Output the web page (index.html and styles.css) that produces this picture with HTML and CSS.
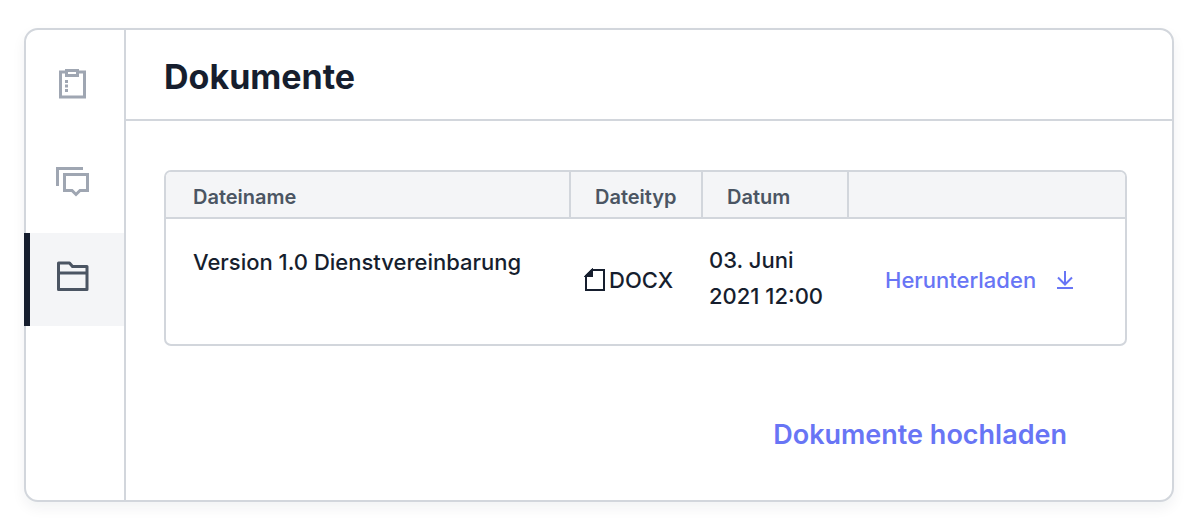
FILE: index.html
```html
<!DOCTYPE html>
<html lang="de">
<head>
  <meta charset="UTF-8" />
  <meta name="viewport" content="width=device-width, initial-scale=1.0"/>
  <title>Dokumente</title>
  <link rel="stylesheet" href="styles.css">
</head>
<body>
  <div class="card">
    <nav class="sidebar">
      <a class="nav-item" href="#aufgaben" aria-label="Aufgaben">
        <svg viewBox="0 0 39 39" fill="none" stroke="currentColor" stroke-width="3">
          <path d="M14 8H7.500V33H31.500V8H25"/>
          <path d="M13.500 6.500H24.500V11.500H13.500z"/>
          <path d="M12 17.500h3M12 22h3M12 26.500h3"/>
        </svg>
      </a>
      <a class="nav-item" href="#nachrichten" aria-label="Nachrichten">
        <svg viewBox="0 0 39 39" fill="none" stroke="currentColor" stroke-width="3">
          <path d="M4.500 24V6.500H30"/>
          <path d="M11.500 12.500H34.500V28.500H27L23 32.500L19 28.500H11.500z"/>
        </svg>
      </a>
      <a class="nav-item active" href="#dokumente" aria-label="Dokumente">
        <svg viewBox="0 0 39 39" fill="none" stroke="currentColor" stroke-width="3" stroke-linejoin="round">
          <path d="M5.500 3H16.500L19.500 6.500H34V29.500H5.500z"/>
          <path d="M5.500 13H34"/>
        </svg>
      </a>
    </nav>

    <main class="content">
      <header>
        <h1>Dokumente</h1>
      </header>

      <div class="documents">
        <div class="table-box">
          <table>
            <thead>
              <tr>
                <th class="col-name">Dateiname</th>
                <th class="col-type">Dateityp</th>
                <th class="col-date">Datum</th>
                <th class="col-action"></th>
              </tr>
            </thead>
            <tbody>
              <tr>
                <td class="file-name">Version 1.0 Dienstvereinbarung</td>
                <td class="file-type">
                  <span class="type">
                    <svg viewBox="0 0 22 24" fill="none" stroke="currentColor" stroke-width="2">
                      <path d="M8 2H20V22H2V8z"/>
                      <path d="M8 2V8H2z" fill="currentColor"/>
                    </svg>DOCX
                  </span>
                </td>
                <td class="file-date">03. Juni<br>2021 12:00</td>
                <td class="file-action">
                  <a class="download" href="#download">
                    Herunterladen
                    <svg viewBox="0 0 18 20" fill="none" stroke="currentColor" stroke-width="2">
                      <path d="M9 1V14M2 7.500L9 14.500L16 7.500M1 18H17"/>
                    </svg>
                  </a>
                </td>
              </tr>
            </tbody>
          </table>
        </div>

        <button class="upload-btn" type="button">Dokumente hochladen</button>
      </div>
    </main>
  </div>
</body>
</html>
```
FILE: styles.css
```css
* {
  margin: 0;
  padding: 0;
  box-sizing: border-box;
}

body {
  background-color: #ffffff;
  color: #161e2e;
  font-family: Inter, sans-serif;
  padding: 28px 26px 30px 24px;
}

.card {
  display: flex;
  background-color: #ffffff;
  border: 2px solid #d2d6dc;
  border-radius: 14px;
  box-shadow: 0 6px 14px rgba(22, 30, 46, 0.06);
}

.sidebar {
  display: flex;
  flex-direction: column;
  gap: 5px;
  padding-top: 7px;
  border-right: 2px solid #d2d6dc;
}

.nav-item {
  position: relative;
  padding: 27px 32px 27px 27px;
  color: #9fa6b2;
}

.nav-item svg {
  display: block;
  width: 39px;
  height: 39px;
}

.nav-item.active {
  background-color: #f4f5f7;
  color: #4b5563;
}

.nav-item.active::before {
  content: "";
  position: absolute;
  top: 0;
  bottom: 0;
  left: -2px;
  width: 6px;
  background-color: #161e2e;
}

.content {
  flex: 1;
}

header {
  padding: 27px 38px 22px;
  border-bottom: 2px solid #d2d6dc;
}

h1 {
  font-size: 34px;
  line-height: 40px;
  font-weight: 700;
}

.documents {
  display: flex;
  flex-direction: column;
  align-items: flex-end;
  padding: 49px 45px 47px 38px;
}

.table-box {
  width: 100%;
  border: 2px solid #d2d6dc;
  border-radius: 7px;
  overflow: hidden;
}

table {
  width: 100%;
  border-collapse: separate;
  border-spacing: 0;
  table-layout: fixed;
}

th {
  padding: 13px 24px 8px;
  background-color: #f4f5f7;
  border-bottom: 2px solid #d2d6dc;
  border-right: 2px solid #d2d6dc;
  color: #4b5563;
  font-size: 20px;
  line-height: 24px;
  font-weight: 600;
  text-align: left;
}

th:first-child {
  padding-left: 27px;
}

th:last-child {
  border-right: none;
}

.col-name {
  width: 405px;
}

.col-type {
  width: 132px;
}

.col-date {
  width: 146px;
}

td {
  padding: 25px 0 28px;
  font-size: 22px;
  font-weight: 450;
  line-height: 36px;
}

.file-name {
  padding-left: 27px;
  vertical-align: top;
}

.file-type {
  padding-left: 13px;
}

.type {
  display: flex;
  align-items: center;
  gap: 3px;
}

.type svg {
  width: 22px;
  height: 24px;
}

.file-date {
  padding: 23px 0 30px 6px;
}

.file-action {
  padding-left: 36px;
}

.download {
  display: flex;
  align-items: center;
  gap: 20px;
  color: #6875f5;
  text-decoration: none;
}

.download svg {
  width: 18px;
  height: 20px;
}

.upload-btn {
  margin-top: 71px;
  margin-right: 60px;
  background: none;
  border: none;
  color: #6875f5;
  font-family: inherit;
  font-size: 27px;
  line-height: 36px;
  font-weight: 600;
  cursor: pointer;
}

.upload-btn:hover,
.download:hover {
  color: #5850ec;
}
```
